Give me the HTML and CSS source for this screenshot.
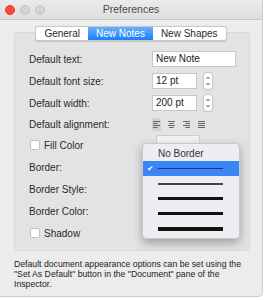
FILE: index.html
```html
<!DOCTYPE html>
<html lang="en">
    <head>
        <meta charset="UTF-8" />
        <title>Preferences</title>
        <link rel="stylesheet" href="styles.css">
    </head>
    <body>
        <div class="window">
            <div class="titlebar">
                <span class="light red"></span>
                <span class="light"></span>
                <span class="light"></span>
                <div class="title">Preferences</div>
            </div>

            <div class="tabs">
                <div class="tab">General</div>
                <div class="tab selected">New Notes</div>
                <div class="tab">New Shapes</div>
            </div>

            <div class="group">
                <div class="row">
                    <div class="label">Default text:</div>
                    <div class="field wide">New Note</div>
                </div>
                <div class="row">
                    <div class="label">Default font size:</div>
                    <div class="field">12 pt</div>
                    <div class="stepper">
                        <svg width="8" height="16" viewBox="0 0 8 16"><path d="M2.5 6l1.5-2 1.5 2M2.5 10l1.5 2 1.5-2" fill="none" stroke="#555" stroke-width="0.9" /></svg>
                    </div>
                </div>
                <div class="row">
                    <div class="label">Default width:</div>
                    <div class="field">200 pt</div>
                    <div class="stepper">
                        <svg width="8" height="16" viewBox="0 0 8 16"><path d="M2.5 6l1.5-2 1.5 2M2.5 10l1.5 2 1.5-2" fill="none" stroke="#555" stroke-width="0.9" /></svg>
                    </div>
                </div>
                <div class="row short">
                    <div class="label">Default alignment:</div>
                    <div class="aligns">
                        <span class="align on">
                            <svg width="7" height="7" viewBox="0 0 7 7"><path d="M0 .5h7M0 2.5h4.5M0 4.5h7M0 6.5h4.5" stroke="#666" /></svg>
                        </span>
                        <span class="align">
                            <svg width="7" height="7" viewBox="0 0 7 7"><path d="M0 .5h7M1.2 2.5h4.6M0 4.5h7M1.2 6.5h4.6" stroke="#666" /></svg>
                        </span>
                        <span class="align">
                            <svg width="7" height="7" viewBox="0 0 7 7"><path d="M0 .5h7M2.5 2.5h4.5M0 4.5h7M2.5 6.5h4.5" stroke="#666" /></svg>
                        </span>
                        <span class="align">
                            <svg width="7" height="7" viewBox="0 0 7 7"><path d="M0 .5h7M0 2.5h7M0 4.5h7M0 6.5h7" stroke="#666" /></svg>
                        </span>
                    </div>
                </div>
                <div class="row check-row">
                    <span class="checkbox"></span>
                    <span class="check-label">Fill Color</span>
                    <span class="color-well"></span>
                </div>
                <div class="row">
                    <div class="label">Border:</div>
                </div>
                <div class="row">
                    <div class="label">Border Style:</div>
                </div>
                <div class="row">
                    <div class="label">Border Color:</div>
                </div>
                <div class="row check-row">
                    <span class="checkbox"></span>
                    <span class="check-label">Shadow</span>
                </div>

                <!-- border width menu, open over the form -->
                <div class="menu">
                    <div class="menu-item text">No Border</div>
                    <div class="menu-item active"><span class="tick">&#10004;</span><span class="line" style="height: 1px"></span></div>
                    <div class="menu-item"><span class="line grey" style="height: 2px"></span></div>
                    <div class="menu-item"><span class="line" style="height: 2.5px"></span></div>
                    <div class="menu-item"><span class="line" style="height: 3px"></span></div>
                    <div class="menu-item"><span class="line" style="height: 4px"></span></div>
                </div>
            </div>

            <p class="note">Default document appearance options can be set using the "Set As Default" button in the "Document" pane of the Inspector.</p>
        </div>
    </body>
</html>
```

FILE: styles.css
```css
body {
    margin: 0;
    background-color: #fff;
    font-family: "Liberation Sans", Arial, sans-serif;
    color: #2a2a2a;
}

.window {
    position: relative;
    width: 263px;
    height: 297px;
    background-color: #ececec;
    border-right: 1px solid #c9c9c9;
    border-bottom: 1px solid #c9c9c9;
    border-radius: 0 0 5px 0;
    box-sizing: border-box;
}

.titlebar {
    position: relative;
    display: flex;
    align-items: center;
    gap: 5px;
    height: 19px;
    padding-left: 5px;
    background: linear-gradient(#ebebeb, #dedede);
    border-bottom: 1px solid #c6c6c6;
}

.light {
    width: 8px;
    height: 8px;
    border-radius: 50%;
    background-color: #d3d3d3;
    border: 0.5px solid #c2c2c2;
}

.light.red {
    background-color: #fc4440;
    border-color: #e23a36;
}

.title {
    position: absolute;
    left: 0;
    right: 0;
    top: 3px;
    text-align: center;
    font-size: 10.5px;
    color: #4a4a4a;
}

.tabs {
    position: relative;
    z-index: 1;
    display: flex;
    width: fit-content;
    margin: 6px auto 0;
    background-color: #fff;
    border: 1px solid #c8c8c8;
    border-radius: 3px;
    box-shadow: 0 0.5px 1px rgba(0, 0, 0, 0.15);
    font-size: 10px;
    line-height: 13px;
    overflow: hidden;
}

.tab {
    padding: 0 8px;
    border-left: 1px solid #d6d6d6;
}

.tab:first-child {
    border-left: none;
}

.tab.selected {
    background: linear-gradient(#68b0fb, #1a80fb);
    color: #fff;
    border-left: none;
}

.tab.selected + .tab {
    border-left: none;
}

.group {
    position: relative;
    height: 219px;
    margin: -9px 12px 0 14px;
    padding: 15px 0 0 14px;
    box-sizing: border-box;
    background-color: #e3e3e3;
    border: 1px solid #dadada;
    border-radius: 4px;
    font-size: 10px;
}

.row {
    display: flex;
    align-items: center;
    height: 22px;
}

.row.short {
    height: 20px;
}

.label {
    width: 123px;
}

.field {
    width: 45px;
    height: 16px;
    padding-left: 3px;
    box-sizing: border-box;
    background-color: #fff;
    border: 1px solid #c7c7c7;
    line-height: 14px;
    font-size: 10px;
    color: #222;
}

.field.wide {
    width: 84px;
}

.stepper {
    display: flex;
    width: 8px;
    height: 16px;
    margin-left: 6px;
    background-color: #fff;
    border: 0.5px solid #c9c9c9;
    border-radius: 4px;
    box-shadow: 0 0.5px 1px rgba(0, 0, 0, 0.12);
}

.aligns {
    display: flex;
    gap: 6px;
}

.align {
    display: flex;
    align-items: center;
    justify-content: center;
    width: 9px;
    height: 13px;
}

.align.on {
    background-color: #d2d2d2;
    border-radius: 1px;
}

.check-row {
    gap: 4px;
    padding-left: 1px;
}

.checkbox {
    width: 8px;
    height: 8px;
    background-color: #fff;
    border: 1px solid #c2c2c2;
    border-radius: 2px;
}

.check-label {
    width: 108px;
}

.color-well {
    align-self: flex-start;
    width: 44px;
    height: 14px;
    margin-top: 1px;
    box-sizing: border-box;
    background-color: #f2f2f2;
    border: 1px solid #cdcdcd;
    border-radius: 2px;
}

.menu {
    position: absolute;
    left: 127px;
    top: 110px;
    width: 96px;
    padding: 2px 0;
    background-color: #eceef1;
    border: 1px solid #c8c8c8;
    border-radius: 4px;
    box-shadow: 0 4px 10px rgba(0, 0, 0, 0.3);
}

.menu-item {
    position: relative;
    display: flex;
    align-items: center;
    height: 15px;
    padding-left: 15px;
}

.menu-item.text {
    font-size: 10px;
    color: #333;
}

.menu-item.active {
    background-color: #3b86f6;
}

.tick {
    position: absolute;
    left: 4px;
    top: 0;
    color: #fff;
    font-size: 8px;
    line-height: 15px;
}

.line {
    width: 65px;
    background-color: #111;
}

.line.grey {
    background-color: #444;
}

.menu-item.active .line {
    background-color: #1b3a72;
}

.note {
    margin: 8px 14px 0;
    font-size: 8.7px;
    line-height: 10px;
    color: #222;
}
```
